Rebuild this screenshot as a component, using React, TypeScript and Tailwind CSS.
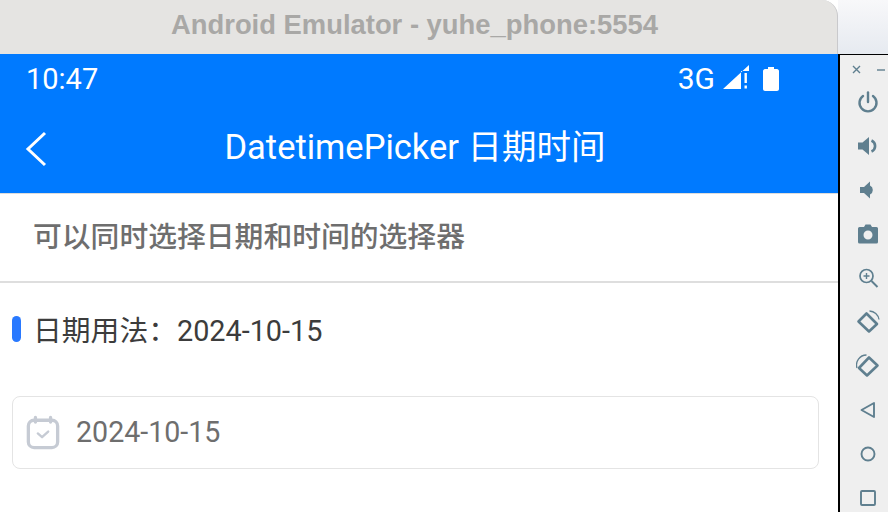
import React from "react";

function SideIcon({ children }: { children: React.ReactNode }) {
  return <div className="flex h-[44px] shrink-0 items-center justify-center">{children}</div>;
}

function Svg({ children }: { children: React.ReactNode }) {
  return (
    <svg width="24" height="24" viewBox="0 0 24 24" fill="none" stroke="#5f7f8f" strokeWidth="2" strokeLinejoin="round">
      {children}
    </svg>
  );
}

export default function App() {
  return (
    <div className="flex h-[512px] w-[888px] overflow-hidden bg-white font-['Roboto','Noto_Sans_CJK_SC',sans-serif]">
      <div className="flex w-[838px] shrink-0 flex-col">
        <div className="flex h-[54px] shrink-0 items-center justify-center rounded-tr-[16px] border-r border-[#c9c9cc] bg-[#e5e4e2] pb-[4px] pr-[8px] font-['Liberation_Sans','Noto_Sans_CJK_SC',sans-serif] text-[27.4px] font-bold text-[#a9a8a6]">
          Android Emulator - yuhe_phone:5554
        </div>
        <div className="flex h-[49px] shrink-0 items-center justify-between bg-[#007aff] pl-[26px] pr-[58px] pt-[1px] text-white">
          <span className="text-[29px] leading-none">10:47</span>
          <div className="flex items-center">
            <span className="text-[30px] leading-none">3G</span>
            <svg width="26" height="24" viewBox="0 0 26 24" fill="white" className="mb-[4px] ml-[8px]">
              <path d="M0 24 L26 0 V6 H18 V24 Z" />
              <rect x="21.5" y="8" width="2.4" height="10" />
              <rect x="21.5" y="20.5" width="2.4" height="3" />
            </svg>
            <svg width="18" height="26" viewBox="0 0 18 26" fill="white" className="mb-[1px] ml-[13px]">
              <path d="M6 1 H12 V3 H15 C16 3 17 4 17 5 V23 C17 24 16 25 15 25 H3 C2 25 1 24 1 23 V5 C1 4 2 3 3 3 H6 Z" />
            </svg>
          </div>
        </div>
        <div className="relative flex h-[91px] shrink-0 items-center justify-center border-b border-[#dcdcdc] bg-[#007aff] pb-[2px] pr-[8px] text-white">
          <svg width="24" height="36" viewBox="0 0 24 36" fill="none" stroke="white" strokeWidth="3" className="absolute left-[24px] top-[28px]">
            <path d="M21 2 L4 18 L21 34" />
          </svg>
          <span className="text-[34.5px] leading-none">DatetimePicker 日期时间</span>
        </div>
        <div className="flex h-[89px] shrink-0 items-center border-b-2 border-[#dedede] pl-[33px] text-[28.8px] font-medium text-[#6e6e6e]">
          可以同时选择日期和时间的选择器
        </div>
        <div className="h-[113px] shrink-0 pl-[12px] pt-[32px] text-[28.8px] leading-[32px] text-[#3c3c3c]">
          <div className="flex items-center">
            <span className="mb-[4px] mr-[12px] h-[26px] w-[9px] rounded-full bg-[#2979ff]" />
            日期用法：2024-10-15
          </div>
        </div>
        <div className="ml-[12px] mr-[19px] flex h-[73px] shrink-0 items-center rounded-[8px] border-[1.5px] border-[#e4e4e4] pl-[13px]">
          <svg width="34" height="35" viewBox="0 0 36 36" fill="none" stroke="#c6cbd4" strokeWidth="3.5" strokeLinecap="round" strokeLinejoin="round">
            <rect x="2.5" y="5" width="31" height="29" rx="6" />
            <path d="M10 2 V7 M26 2 V7" />
            <path d="M12.5 19 L17 23 L23.5 17" strokeWidth="2.5" />
          </svg>
          <span className="ml-[16px] text-[28.6px] text-[#6e6e6e]">2024-10-15</span>
        </div>
      </div>
      <div className="flex min-h-0 flex-1 flex-col">
        <div className="h-[54px] shrink-0 bg-gradient-to-b from-[#f8f8fa] to-[#e6eaf0]" />
        <div className="flex min-h-0 flex-1 flex-col border-l-2 border-t border-black bg-[#efefef] pl-[8px]">
          <div className="-ml-[8px] flex h-[25px] shrink-0 items-center justify-between pl-[12px] pr-[3px] pt-[4px] text-[#5f7f8f]">
            <svg width="9" height="9" viewBox="0 0 9 9" stroke="currentColor" strokeWidth="1.4"><path d="M1 1 L8 8 M8 1 L1 8" /></svg>
            <span className="h-[2px] w-[8px] bg-[#8aa0ab]" />
          </div>
          <SideIcon>
            <Svg><path d="M12 2.5 V12" strokeLinecap="round" strokeWidth="2.4" /><path d="M7 6 A8.5 8.5 0 1 0 17 6" strokeLinecap="round" strokeWidth="2.4" /></Svg>
          </SideIcon>
          <SideIcon>
            <Svg>
              <path d="M2 8.5 H6.5 L13 3 V21 L6.5 15.5 H2 Z" fill="#5f7f8f" stroke="none" />
              <path d="M15.5 6.5 A6 6 0 0 1 15.5 17.5" strokeWidth="2.6" />
            </Svg>
          </SideIcon>
          <SideIcon>
            <Svg><path d="M4 9 H8 L14 3.5 V20.5 L8 15 H4 Z" fill="#5f7f8f" stroke="none" /><path d="M14 7.5 A5 5 0 0 1 14 16.5 Z" fill="#5f7f8f" stroke="none" /></Svg>
          </SideIcon>
          <SideIcon>
            <Svg>
              <path d="M3.5 5 H8 L9.5 2.5 H14.5 L16 5 H20.5 A1.5 1.5 0 0 1 22 6.5 V20 A1.5 1.5 0 0 1 20.5 21.5 H3.5 A1.5 1.5 0 0 1 2 20 V6.5 A1.5 1.5 0 0 1 3.5 5 Z M12 8.5 A4.5 4.5 0 1 0 12 17.5 A4.5 4.5 0 1 0 12 8.5 Z" fill="#5f7f8f" fillRule="evenodd" stroke="none" />
            </Svg>
          </SideIcon>
          <SideIcon>
            <Svg>
              <circle cx="10.5" cy="10" r="6.5" strokeWidth="1.7" />
              <path d="M15.5 15 L21.5 21" strokeWidth="2" />
              <path d="M7.5 10 H13.5 M10.5 7 V13" strokeWidth="1.4" />
            </Svg>
          </SideIcon>
          <SideIcon>
            <Svg>
              <path d="M2.5 11.5 L10.5 3.5 L21 14 L13 21.5 Z" strokeWidth="2.6" />
              <path d="M13.5 1 A10 10 0 0 1 23 9.5" strokeWidth="1.3" />
            </Svg>
          </SideIcon>
          <SideIcon>
            <Svg>
              <path d="M3 14 L13 3.5 L21.5 11.5 L11 21.5 Z" strokeWidth="2.6" />
              <path d="M1 14 A10 10 0 0 1 10.5 1" strokeWidth="1.3" />
            </Svg>
          </SideIcon>
          <SideIcon>
            <Svg><path d="M5.5 12 L18 5 V19 Z" strokeWidth="1.9" /></Svg>
          </SideIcon>
          <SideIcon>
            <Svg><circle cx="12" cy="12" r="6.5" strokeWidth="1.9" /></Svg>
          </SideIcon>
          <SideIcon>
            <Svg><rect x="5" y="5" width="14" height="14" rx="1" strokeWidth="1.9" /></Svg>
          </SideIcon>
        </div>
      </div>
    </div>
  );
}
